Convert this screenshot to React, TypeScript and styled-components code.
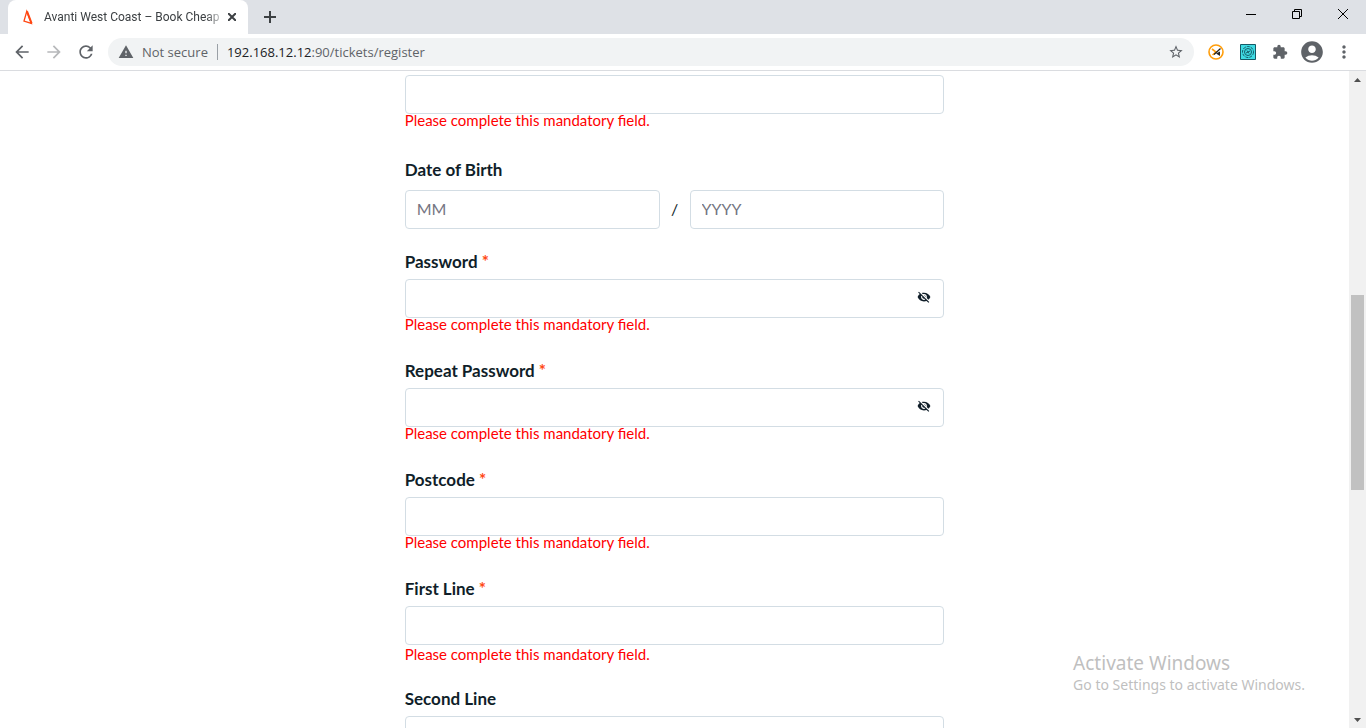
import React from "react";
import styled, { createGlobalStyle } from "styled-components";
import {
  MdArrowBack,
  MdArrowForward,
  MdRefresh,
  MdWarning,
  MdStarBorder,
  MdExtension,
  MdAccountCircle,
  MdMoreVert,
  MdVisibilityOff,
} from "react-icons/md";

const GlobalStyle = createGlobalStyle`
  * { box-sizing: border-box; }
  body { margin: 0; background: #fff; overflow: hidden; }
  button { border: 0; padding: 0; background: none; color: inherit; font: inherit; }
`;

const uiFont = `"Open Sans", "Noto Sans", sans-serif`;
const pageFont = `Lato, "Liberation Sans", sans-serif`;

const Browser = styled.div`
  display: flex;
  flex-direction: column;
  height: 100vh;
  font-family: ${uiFont};
`;

const TabStrip = styled.header`
  display: flex;
  flex: none;
  height: 34px;
  padding-left: 8px;
  background: #dee1e6;
`;

const Tab = styled.div`
  display: flex;
  align-items: center;
  width: 240px;
  padding: 0 12px;
  border-radius: 8px 8px 0 0;
  background: #fff;
  color: #3c4043;
`;

const TabTitle = styled.span`
  flex: 1;
  margin-left: 8px;
  white-space: nowrap;
  font-family: Roboto, ${uiFont};
  font-size: 12px;
  line-height: 16px;
  mask-image: linear-gradient(to right, #000 92%, rgba(0, 0, 0, 0.3));
`;

const TabButton = styled.button`
  display: grid;
  place-items: center;
  width: 16px;
  height: 16px;
  margin-left: 4px;
  margin-right: -4px;
`;

const NewTab = styled.button`
  display: grid;
  place-items: center;
  width: 28px;
  margin-left: 8px;
`;

const WindowControls = styled.div`
  display: flex;
  margin-left: auto;
`;

const WindowButton = styled.button`
  display: grid;
  place-items: center;
  width: 46px;
  height: 28px;
`;

const Toolbar = styled.nav`
  display: flex;
  flex: none;
  align-items: center;
  height: 37px;
  padding: 0 10px 0 12px;
  border-bottom: 1px solid #dadce0;
  background: #fff;
  color: #5f6368;
`;

const ToolButton = styled.button<{ $muted?: boolean }>`
  display: grid;
  flex: none;
  place-items: center;
  width: 20px;
  margin-right: 12px;
  opacity: ${(p) => (p.$muted ? 0.45 : 1)};
`;

const AddressBar = styled.div`
  display: flex;
  flex: 1;
  align-items: center;
  height: 28px;
  min-width: 0;
  padding: 0 10px;
  border-radius: 14px;
  background: #f1f3f4;
  font-size: 13px;
  line-height: 20px;
`;

const Security = styled.span`
  margin-left: 8px;
  padding-right: 9px;
`;

const Address = styled.span`
  flex: 1;
  padding-left: 9px;
  border-left: 1px solid #9aa0a6;
  line-height: 16px;
  white-space: nowrap;
`;

const Host = styled.span`
  color: #202124;
`;

const BookmarkButton = styled.button`
  display: grid;
  place-items: center;
  width: 16px;
  height: 16px;
`;

const Extensions = styled.div`
  display: flex;
  align-items: center;
  gap: 8px;
  margin-left: 10px;
`;

const ExtensionButton = styled.button`
  display: flex;
  align-items: center;
  justify-content: center;
  width: 24px;
  height: 24px;

  svg { flex: none; }
`;

const Viewport = styled.div`
  display: flex;
  flex: 1;
  min-height: 0;
`;

const Page = styled.main`
  position: relative;
  flex: 1;
  overflow: hidden;
  padding-top: 4px;
  font-family: ${pageFont};
  color: #101e29;
`;

const Form = styled.form`
  width: 40%;
  min-width: 280px;
  margin: 0 auto;
`;

const Field = styled.div<{ $after?: number }>`
  display: flex;
  flex-direction: column;
  margin-bottom: ${(p) => p.$after ?? 29}px;
`;

const Label = styled.label<{ $gap?: number }>`
  margin-bottom: ${(p) => p.$gap ?? 5}px;
  font-size: 17px;
  font-weight: 700;
  line-height: 24px;
`;

const Required = styled.span`
  color: #ff4713;
`;

const InputWrap = styled.div`
  position: relative;
`;

const Input = styled.input`
  display: block;
  width: 100%;
  height: 39px;
  padding: 0 11px 2px;
  border: 1px solid #d3dde4;
  border-radius: 4px;
  background: #fff;
  color: inherit;
  font-family: inherit;
  font-size: 16px;
  outline: none;
  &::placeholder { color: #757582; opacity: 1; }
`;

const Reveal = styled.button`
  position: absolute;
  top: 11px;
  right: 13px;
  display: grid;
  place-items: center;
  width: 14px;
  height: 14px;
`;

const ErrorText = styled.p<{ $gap?: number }>`
  margin: ${(p) => p.$gap ?? 0}px 0 0;
  color: #f00;
  font-size: 15px;
  line-height: 12px;
`;

const DateRow = styled.div`
  display: grid;
  grid-template-columns: 1fr 30px 1fr;
  align-items: center;
`;

const Slash = styled.span`
  padding-bottom: 2px;
  text-align: center;
`;

const ScrollBar = styled.div`
  display: flex;
  flex-direction: column;
  flex: none;
  align-items: center;
  width: 17px;
  background: #f1f1f1;
`;

const ScrollButton = styled.button`
  display: grid;
  flex: none;
  place-items: center;
  width: 17px;
  height: 17px;
`;

const ScrollTrack = styled.div`
  flex: 1;
  width: 13px;
  padding-top: 207px;
`;

const ScrollThumb = styled.div`
  height: 195px;
  background: #c1c1c1;
`;

const Watermark = styled.aside`
  position: absolute;
  right: 44px;
  bottom: 33px;
  color: #bfbfbf;
  font-family: "Noto Sans", "Open Sans", sans-serif;
`;

const WatermarkTitle = styled.div`
  font-size: 19px;
  line-height: 24px;
`;

const WatermarkText = styled.div`
  font-size: 14px;
  line-height: 20px;
`;

type TextFieldProps = {
  id: string;
  label?: string;
  required?: boolean;
  secret?: boolean;
  error?: boolean;
  errorGap?: number;
  after?: number;
};

function TextField({ id, label, required, secret, error, errorGap, after }: TextFieldProps) {
  return (
    <Field $after={after}>
      {label && (
        <Label htmlFor={id}>
          {label} {required && <Required>*</Required>}
        </Label>
      )}
      <InputWrap>
        <Input id={id} type={secret ? "password" : "text"} aria-label={label ? undefined : id} />
        {secret && (
          <Reveal type="button" aria-label="Show password">
            <MdVisibilityOff size={14} />
          </Reveal>
        )}
      </InputWrap>
      {error && <ErrorText $gap={errorGap}>Please complete this mandatory field.</ErrorText>}
    </Field>
  );
}

export default function App() {
  return (
    <Browser>
      <GlobalStyle />
      <TabStrip>
        <Tab>
          <svg width="16" height="16" viewBox="0 0 16 16" fill="none" stroke="#ff4713">
            <path d="M6.8 2.2 4 12 11.4 14.4Z" strokeWidth="1.3" />
            <path d="M7 2.4 11.6 14.4" strokeWidth="2" />
          </svg>
          <TabTitle>Avanti West Coast – Book Cheap</TabTitle>
          <TabButton aria-label="Close tab">
            <svg width="8" height="8" viewBox="0 0 8 8" stroke="#3c4043" strokeWidth="2">
              <path d="M0 0 8 8M8 0 0 8" />
            </svg>
          </TabButton>
        </Tab>
        <NewTab aria-label="New tab">
          <svg width="12" height="12" viewBox="0 0 12 12" stroke="#3c4043" strokeWidth="2">
            <path d="M6 0V12M0 6H12" />
          </svg>
        </NewTab>
        <WindowControls>
          <WindowButton aria-label="Minimise">
            <svg width="10" height="10" viewBox="0 0 10 10" stroke="#000">
              <path d="M0 5.5H10" />
            </svg>
          </WindowButton>
          <WindowButton aria-label="Restore">
            <svg width="10" height="10" viewBox="0 0 10 10" stroke="#000" fill="none">
              <path d="M.5 2.5H7.5V9.5H.5ZM2.5 2.5V.5H9.5V7.5H7.5" />
            </svg>
          </WindowButton>
          <WindowButton aria-label="Close">
            <svg width="10" height="10" viewBox="0 0 10 10" stroke="#000">
              <path d="M0 0 10 10M10 0 0 10" />
            </svg>
          </WindowButton>
        </WindowControls>
      </TabStrip>

      <Toolbar>
        <ToolButton aria-label="Back"><MdArrowBack size={20} /></ToolButton>
        <ToolButton aria-label="Forward" $muted><MdArrowForward size={20} /></ToolButton>
        <ToolButton aria-label="Reload"><MdRefresh size={20} /></ToolButton>
        <AddressBar>
          <MdWarning size={16} />
          <Security>Not secure</Security>
          <Address>
            <Host>192.168.12.12</Host>:90/tickets/register
          </Address>
          <BookmarkButton aria-label="Bookmark"><MdStarBorder size={16} /></BookmarkButton>
        </AddressBar>
        <Extensions>
          <ExtensionButton aria-label="Speed extension">
            <svg width="16" height="16" viewBox="0 0 16 16" fill="none">
              <circle cx="8" cy="8" r="7" stroke="#ff9d0a" strokeWidth="1.6" />
              <path d="M4 5 8 8 4.5 11" stroke="#ff9d0a" strokeWidth="1.6" />
              <path d="M12.5 4.5 6 10.5" stroke="#222" strokeWidth="1.2" />
              <path d="M8 9.5 12 7.5V12Z" fill="#222" />
            </svg>
          </ExtensionButton>
          <ExtensionButton aria-label="Fingerprint extension">
            <svg width="16" height="16" viewBox="0 0 16 16" fill="none" stroke="#155a66">
              <path d="M.5.5H15.5V15.5H.5Z" fill="#3fdbe3" />
              <circle cx="8" cy="8" r="5.5" strokeDasharray="3 1" />
              <circle cx="8" cy="8" r="3.5" />
              <path d="M6 9 10 7M7 6.5 9 9.5" />
            </svg>
          </ExtensionButton>
          <ExtensionButton aria-label="Extensions"><MdExtension size={16} /></ExtensionButton>
          <ExtensionButton aria-label="Profile"><MdAccountCircle size={26} /></ExtensionButton>
          <ExtensionButton aria-label="Menu"><MdMoreVert size={20} /></ExtensionButton>
        </Extensions>
      </Toolbar>

      <Viewport>
        <Page>
          <Form>
            <TextField id="email" error after={32} />
            <Field $after={21}>
              <Label htmlFor="month" $gap={8}>Date of Birth</Label>
              <DateRow>
                <Input id="month" placeholder="MM" />
                <Slash>/</Slash>
                <Input aria-label="Year of birth" placeholder="YYYY" />
              </DateRow>
            </Field>
            <TextField id="password" label="Password" required secret error />
            <TextField id="repeat" label="Repeat Password" required secret error />
            <TextField id="postcode" label="Postcode" required error />
            <TextField id="line1" label="First Line" required error errorGap={3} after={27} />
            <TextField id="line2" label="Second Line" />
          </Form>
          <Watermark>
            <WatermarkTitle>Activate Windows</WatermarkTitle>
            <WatermarkText>Go to Settings to activate Windows.</WatermarkText>
          </Watermark>
        </Page>
        <ScrollBar>
          <ScrollButton aria-label="Scroll up">
            <svg width="7" height="4" viewBox="0 0 7 4" fill="#505050"><path d="M0 4 3.5 0 7 4Z" /></svg>
          </ScrollButton>
          <ScrollTrack><ScrollThumb /></ScrollTrack>
          <ScrollButton aria-label="Scroll down">
            <svg width="7" height="4" viewBox="0 0 7 4" fill="#505050"><path d="M0 0 3.5 4 7 0Z" /></svg>
          </ScrollButton>
        </ScrollBar>
      </Viewport>
    </Browser>
  );
}
